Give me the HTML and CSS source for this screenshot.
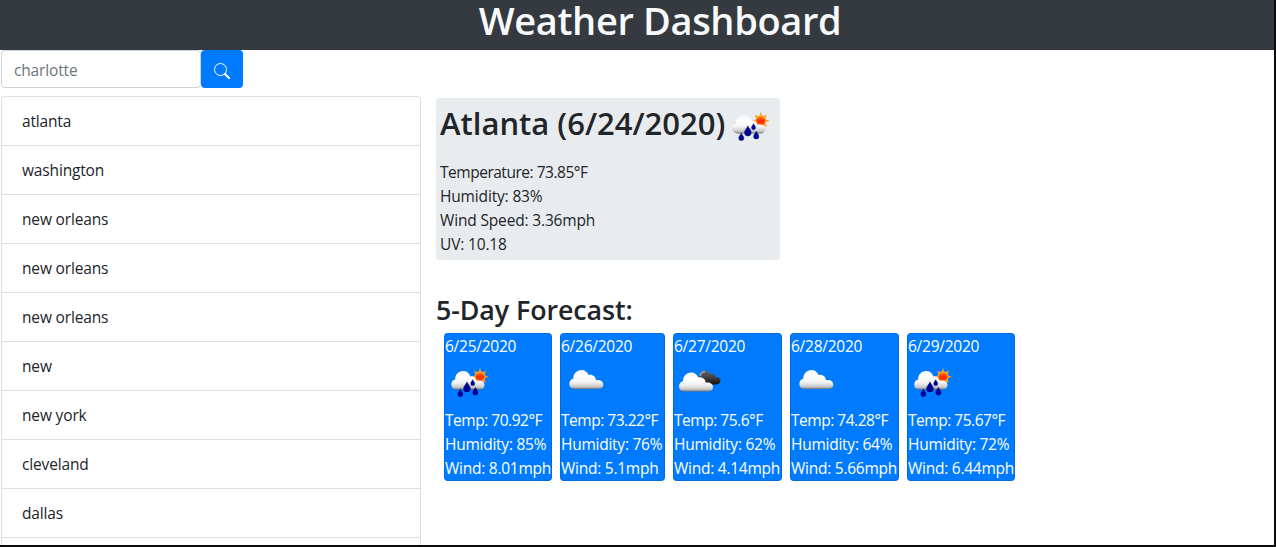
FILE: index.html
```
<!DOCTYPE html>
<html lang="en">
<head>
<meta charset="utf-8">
<title>Weather Dashboard</title>
<link rel="stylesheet" href="styles.css">
</head>
<body>
<svg class="defs" aria-hidden="true">
  <defs>
    <linearGradient id="white" x1="0" y1="0" x2="0" y2="1">
      <stop offset="0" stop-color="#f4f4f4"/><stop offset=".3" stop-color="#fff"/><stop offset=".65" stop-color="#f2f2f2"/><stop offset=".88" stop-color="#c8c8c8"/><stop offset="1" stop-color="#777"/>
    </linearGradient>
    <linearGradient id="dark" x1="0" y1="0" x2="0" y2="1">
      <stop offset="0" stop-color="#666"/><stop offset=".4" stop-color="#484848"/><stop offset="1" stop-color="#111"/>
    </linearGradient>
    <linearGradient id="sun" x1="0" y1="0" x2="0" y2="1">
      <stop offset="0" stop-color="#ff8a1c"/><stop offset=".5" stop-color="#fa2c00"/><stop offset="1" stop-color="#ff4a10"/>
    </linearGradient>
    <path id="cloud" d="M6 19C2.500 19 0 17 0 14C0 11 1.700 9.200 4 8.700C4 3.500 7.500 0 12 0C15.600 0 18.300 2 19.300 5C23 4 26.500 6.500 26.700 10.200C31 9.500 34 11.500 34 14.700C34 17.500 31.800 19 28.500 19Z"/>
    <path id="drop" d="M0-4.300C.6-2.500 2.900-.8 2.900 1.400A2.900 2.900 0 0 1-2.900 1.400C-2.900-.8-.6-2.500 0-4.300Z"/>
    <symbol id="cloudy" viewBox="0 0 50 50"><use href="#cloud" x="8.300" y="12" fill="url(#white)"/></symbol>
    <symbol id="broken" viewBox="0 0 50 50">
      <path d="M26 20C24 16 27 12.700 31 12.700C34 12.700 35.500 14.500 36 16.300C39 15 41.500 16.800 42 19.300C44.800 19 46.500 20.500 46.500 22.800C46.500 25.200 44.500 26.500 42 26.500H29Z" fill="url(#dark)"/>
      <path d="M26.300 18A5 5 0 0 1 31 13.500" fill="none" stroke="#aaa" stroke-width="1.500"/>
      <use href="#cloud" x="5" y="14.500" fill="url(#white)"/>
    </symbol>
    <symbol id="rain" viewBox="0 0 50 50">
      <path d="M35 9.700L36.500 14.500L41 12.700L39.200 17.200L44 18.700L39.200 20.200L41 24.700L36.500 22.900L35 27.700L33.500 22.900L29 24.700L30.800 20.200L26 18.700L30.800 17.200L29 12.700L33.500 14.500Z" fill="#ff9d18"/>
      <circle cx="35" cy="18.700" r="5.400" fill="#ffac30"/>
      <circle cx="35" cy="18.700" r="4.400" fill="url(#sun)"/>
      <path d="M12 31.500C8.500 31.500 6.300 29.500 6.300 26.500C6.300 23.500 8 22 10.200 21.500C10 16.500 13.500 13 18 13C22 13 24.500 15 25.300 18.500C28.500 17.500 31 20 31.500 23C36 21.500 39.500 23.700 39.500 27C39.500 30 37.500 31.500 34 31.500Z" fill="url(#white)"/>
      <g fill="#00009a" stroke="#001060" stroke-width=".4">
        <use href="#drop" transform="translate(15.400 34.800) scale(.9)"/>
        <use href="#drop" transform="translate(22 29) scale(1.180)"/>
        <use href="#drop" transform="translate(27.700 24.700) scale(.72)"/>
        <use href="#drop" transform="translate(30.400 33.200) scale(.92)"/>
      </g>
    </symbol>
  </defs>
</svg>
<header class="header"><h1 class="title">Weather Dashboard</h1></header>
<main class="layout">
  <section class="sidebar">
    <form class="search">
      <input class="search-input" type="text" placeholder="charlotte" aria-label="City">
      <button class="search-button" type="button" aria-label="Search">
        <svg width="16" height="16" viewBox="0 0 16 16" fill="none" stroke="#fff"><circle cx="6.500" cy="6.500" r="6"/><path d="M11 11L15 15" stroke-width="2" stroke-linecap="round"/></svg>
      </button>
    </form>
    <ul class="cities">
      <li>atlanta</li><li>washington</li><li>new orleans</li><li>new orleans</li><li>new orleans</li><li>new</li><li>new york</li><li>cleveland</li><li>dallas</li>
    </ul>
  </section>
  <section class="weather">
    <article class="current">
      <div class="current-head"><h2 class="current-title">Atlanta (6/24/2020)</h2><svg class="icon"><use href="#rain"/></svg></div>
      <p class="temp">Temperature: 73.85°F</p><p>Humidity: 83%</p><p>Wind Speed: 3.36mph</p><p>UV: 10.18</p>
    </article>
    <h3 class="forecast-title">5-Day Forecast:</h3>
    <div class="forecast">
      <article class="day"><p>6/25/2020</p><svg class="icon"><use href="#rain"/></svg><p class="temp">Temp: 70.92°F</p><p>Humidity: 85%</p><p>Wind: 8.01mph</p></article>
      <article class="day day-narrow"><p>6/26/2020</p><svg class="icon"><use href="#cloudy"/></svg><p class="temp">Temp: 73.22°F</p><p>Humidity: 76%</p><p>Wind: 5.1mph</p></article>
      <article class="day day-wide"><p>6/27/2020</p><svg class="icon"><use href="#broken"/></svg><p class="temp">Temp: 75.6°F</p><p>Humidity: 62%</p><p>Wind: 4.14mph</p></article>
      <article class="day day-wide"><p>6/28/2020</p><svg class="icon"><use href="#cloudy"/></svg><p class="temp">Temp: 74.28°F</p><p>Humidity: 64%</p><p>Wind: 5.66mph</p></article>
      <article class="day"><p>6/29/2020</p><svg class="icon"><use href="#rain"/></svg><p class="temp">Temp: 75.67°F</p><p>Humidity: 72%</p><p>Wind: 6.44mph</p></article>
    </div>
  </section>
</main>
</body>
</html>
```
FILE: styles.css
```
* { box-sizing: border-box; }
html { overflow: hidden; }
body {
  margin: 0;
  height: 547px;
  overflow: hidden;
  border-right: 2px solid #0b0b0d;
  border-bottom: 2px solid #0b0b0d;
  background: #fff;
  color: #212529;
  font: 15.500px/24px "Open Sans", "Noto Sans", sans-serif;
  letter-spacing: -.16px;
}
h1, h2, h3, p, ul { margin: 0; padding: 0; }
.defs { display: block; width: 0; height: 0; }
.header { height: 50px; background: #343a40; text-align: center; padding-left: 46px; }
.title { color: #f8f9fa; font-size: 38px; font-weight: 580; line-height: 40px; letter-spacing: -.35px; }
.layout { display: flex; height: 495px; }
.sidebar { display: flex; flex-direction: column; width: 421px; padding-left: 1px; flex: none; }
.search { display: flex; height: 38px; flex: none; }
.search-input {
  width: 200px;
  padding: 6px 12px 4px;
  border: 1px solid #ced4da;
  border-radius: 4px;
  color: #495057;
  font: inherit;
  letter-spacing: inherit;
}
.search-input::placeholder { color: #6c757d; opacity: 1; }
.search-button {
  display: flex;
  align-items: center;
  justify-content: center;
  width: 42px;
  padding: 4px 0 0;
  border: 0;
  border-radius: 4px;
  background: #007bff;
}
.cities {
  flex: 1;
  margin-top: 8px;
  border: 1px solid #dfdfdf;
  border-bottom: 0;
  border-radius: 4px 4px 0 0;
  list-style: none;
}
.cities li { height: 49px; padding: 12px 20px; border-bottom: 1px solid #dfdfdf; }
.weather { padding: 48px 0 0 15px; }
.current {
  width: 344px;
  height: 162px;
  padding: 4px;
  border-radius: 4px;
  background: #e9ecef;
}
.current-head { display: flex; gap: 1px; height: 58px; }
.current-title { width: 286px; white-space: nowrap; font-size: 31px; font-weight: 580; line-height: 43px; letter-spacing: 0; }
.temp { letter-spacing: -.48px; }
.icon { display: block; width: 50px; height: 50px; }
.forecast-title { margin-top: 33px; font-size: 26.800px; font-weight: 580; line-height: 34px; letter-spacing: -.08px; }
.forecast { display: flex; gap: 8px; margin: 6px 0 0 8px; }
.day {
  width: 108px;
  height: 148px;
  border: 1px solid rgba(0, 0, 0, .125);
  border-radius: 4px;
  background: #007bff;
  color: #fff;
  white-space: nowrap;
  letter-spacing: -.25px;
}
.day-narrow { width: 105px; }
.day-wide { width: 109px; }
```
